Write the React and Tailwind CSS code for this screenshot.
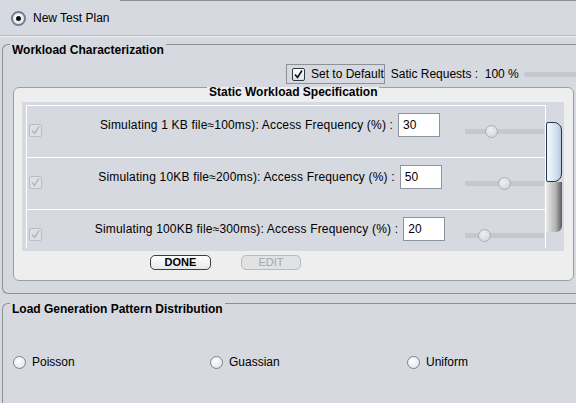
import React from "react";

const rows = [
  { label: "Simulating 1 KB file≈100ms): Access Frequency (%) :", value: "30", thumb: "ml-[20px]" },
  { label: "Simulating 10KB file≈200ms): Access Frequency (%) :", value: "50", thumb: "ml-[33px]" },
  { label: "Simulating 100KB file≈300ms): Access Frequency (%) :", value: "20", thumb: "ml-[13px]" },
];

const Radio = () => (
  <span className="w-[13px] h-[13px] shrink-0 rounded-full border border-[#7c828b] bg-[radial-gradient(circle_at_40%_35%,#ffffff,#dde0e5)]" />
);

const SelectedRadio = () => (
  <span className="w-[15px] h-[15px] shrink-0 rounded-full border-2 border-[#6d7f96] bg-[radial-gradient(circle_at_40%_35%,#ffffff,#d8dde4)] flex items-center justify-center">
    <span className="w-[5px] h-[5px] rounded-full bg-[#111]" />
  </span>
);

const CheckMark = ({ color }) => (
  <svg width="11" height="11" viewBox="0 0 11 11">
    <path d="M2 5.5 L4.5 8.5 L9 1.5" fill="none" stroke={color} strokeWidth="1.6" />
  </svg>
);

const Slider = ({ thumb, width }) => (
  <div className={`${width} h-[13px] flex items-center bg-[linear-gradient(transparent_4px,#c4c8cf_4px,#c4c8cf_9px,transparent_9px)]`}>
    <span className={`${thumb} w-[13px] h-[13px] rounded-full border border-[#a9aeb6] bg-[radial-gradient(circle_at_40%_35%,#eef0f3,#ccd0d6)]`} />
  </div>
);

export default function App() {
  return (
    <div className="w-[576px] h-[403px] overflow-hidden bg-[#d6d9df] text-[12px] text-black font-['Liberation_Sans',Arial,sans-serif] flex flex-col">
      <div className="h-px ml-[120px] bg-[#8d9097] shrink-0" />
      <div className="h-[34px] shrink-0 flex items-center pl-[11px] gap-[7px]">
        <SelectedRadio />
        <span>New Test Plan</span>
      </div>
      <div className="h-px shrink-0 bg-[#b9bcc2]" />
      <div className="h-px shrink-0 bg-[#eceef1]" />

      {/* Workload Characterization */}
      <fieldset className="ml-[2px] h-[257px] shrink-0 border border-r-0 border-[#8d9097] rounded-l-[6px]">
        <legend className="ml-[7px] px-[2px] leading-[14px] font-bold translate-y-[6px]">Workload Characterization</legend>

        <div className="mt-[13px] h-[20px] flex items-center">
          <label className="ml-[283px] h-[20px] shrink-0 flex items-center gap-[6px] pl-[5px] border border-[#8d9097]">
            <span className="w-[13px] h-[13px] shrink-0 rounded-[2px] border border-[#2f3a47] bg-[linear-gradient(#ffffff,#dfe3e9)] flex items-center justify-center">
              <CheckMark color="#111" />
            </span>
            <span className="whitespace-nowrap">Set to Default</span>
          </label>
          <span className="ml-[6px] whitespace-pre">Satic Requests :  100 %</span>
          <div className="ml-[5px] flex-1 h-[5px] rounded-l-full bg-[#c4c8cf]" />
        </div>

        {/* Static Workload Specification */}
        <fieldset className="ml-[10px] w-[561px] h-[197px] border border-[#9a9da3] rounded-[6px] bg-[#eeeeee]">
          <legend className="ml-[193px] px-[2px] leading-[6px] font-bold translate-y-[5px]">Static Workload Specification</legend>

          <div className="ml-[8px] mt-[12px] w-[542px] h-[149px] bg-[#d6d9df] flex pl-[4px] pt-[3px] overflow-hidden">
            <div className="w-[520px] h-[143px] shrink-0 border-x border-t border-white overflow-hidden">
              {rows.map((r) => (
                <div key={r.value} className="h-[52px] border-b border-white flex items-start">
                  <span className="ml-[2px] mt-[18px] w-[13px] h-[13px] shrink-0 rounded-[2px] border border-[#b9bdc3] bg-[#dde0e5] flex items-center justify-center">
                    <CheckMark color="#b7bbc1" />
                  </span>
                  <div className="w-[423px] shrink-0 pl-[33px] mt-[7px] h-[24px] flex items-center justify-center gap-[5px]">
                    <span className="whitespace-nowrap tracking-[0.18px]">{r.label}</span>
                    <input
                      readOnly
                      value={r.value}
                      className="w-[42px] h-[24px] shrink-0 px-[4px] border border-[#8e949b] bg-white text-[12px] outline-none"
                    />
                  </div>
                  <div className="mt-[19px]">
                    <Slider thumb={r.thumb} width="w-[79px]" />
                  </div>
                </div>
              ))}
            </div>
            <div className="w-[16px] shrink-0 flex flex-col pt-[17px]">
              <div className="h-[60px] rounded-r-[8px] rounded-l-[2px] border border-[#23374d] bg-[linear-gradient(to_right,#f3f7fb,#d5e3f0_60%,#b3cadf)]" />
              <div className="h-[50px] rounded-br-[6px] bg-[linear-gradient(to_right,#ebebeb,#b4b4b4_60%,#5a5a5a)]" />
            </div>
          </div>

          <div className="mt-[4px] ml-[136px] flex gap-[30px]">
            <button className="w-[61px] h-[15px] rounded-[5px] border border-[#3c3c3c] bg-[linear-gradient(#ffffff,#e6e7e9)] text-[11px] leading-[13px] font-bold">
              DONE
            </button>
            <button className="w-[60px] h-[15px] rounded-[5px] border border-[#b7babe] bg-[#e1e2e4] text-[11px] leading-[13px] text-[#a3a6aa]">
              EDIT
            </button>
          </div>
        </fieldset>
      </fieldset>

      {/* Load Generation Pattern Distribution */}
      <fieldset className="ml-[2px] mt-[2px] h-[140px] shrink-0 border border-r-0 border-b-0 border-[#8d9097] rounded-tl-[6px]">
        <legend className="ml-[7px] px-[2px] leading-[14px] font-bold translate-y-[6px]">Load Generation Pattern Distribution</legend>
        <div className="mt-[43px] ml-[10px] flex">
          {["Poisson", "Guassian", "Uniform"].map((l) => (
            <div key={l} className="w-[197px] flex items-center gap-[6px]">
              <Radio />
              <span>{l}</span>
            </div>
          ))}
        </div>
      </fieldset>
    </div>
  );
}
